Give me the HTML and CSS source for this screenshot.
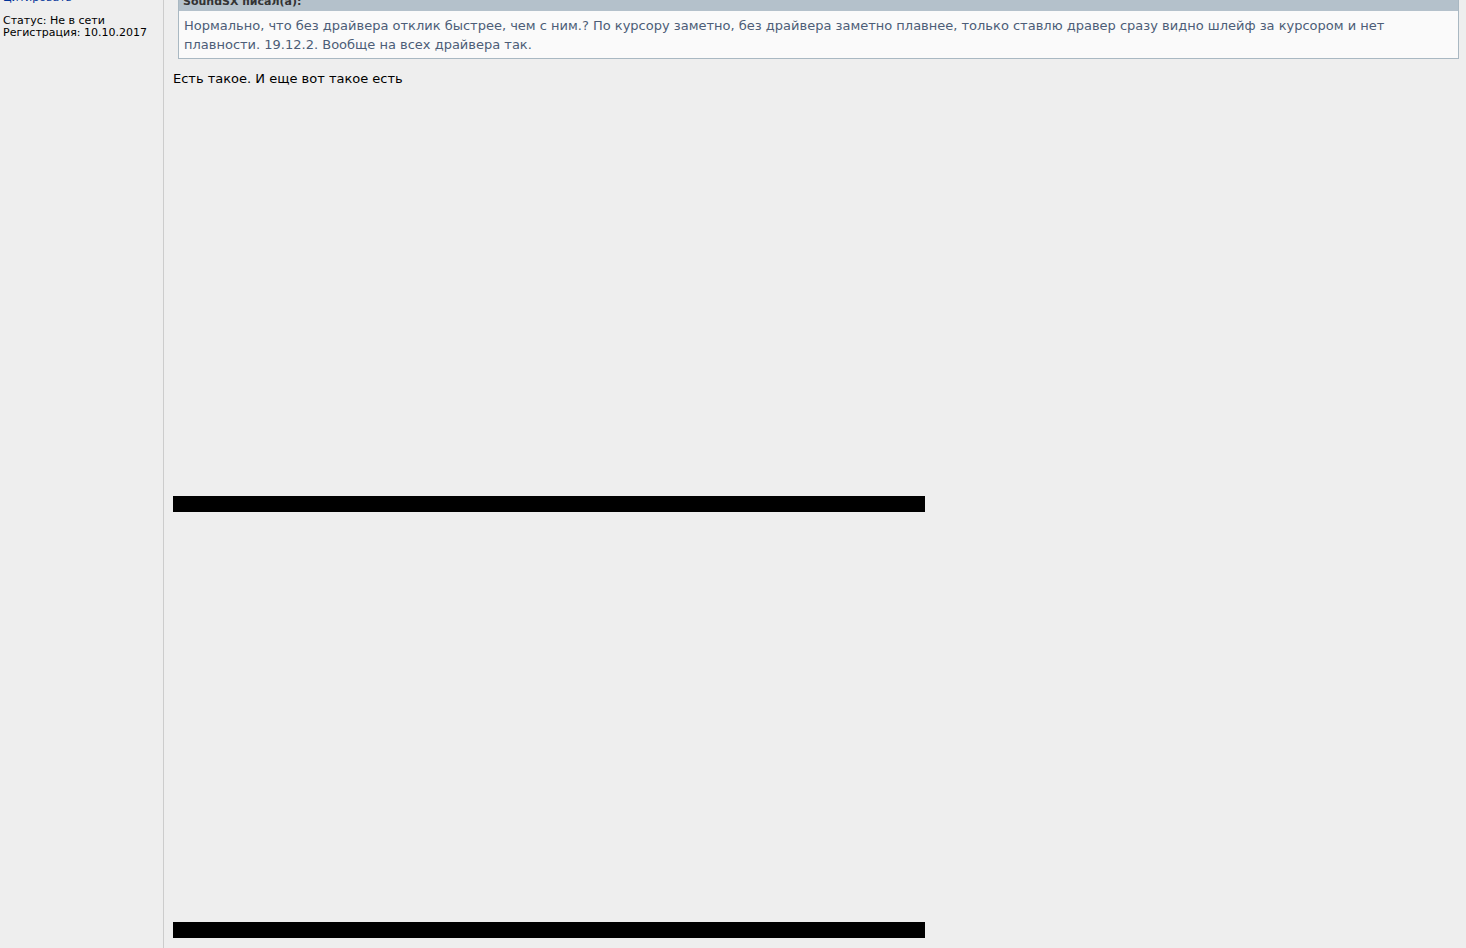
FILE: index.html
```html
<!DOCTYPE html>
<html lang="ru">
<head>
  <meta charset="UTF-8">
  <meta name="viewport" content="width=device-width, initial-scale=1.0">
  <title>Форум</title>
  <link rel="stylesheet" href="styles.css">
</head>
<body>
  <div class="post">
    <aside class="profile">
      <a href="#quote">Цитировать</a>
      <p class="details">
        Статус: Не в сети<br>
        Регистрация: 10.10.2017
      </p>
    </aside>

    <main class="content">
      <blockquote class="quote" id="quote">
        <div class="quote-title">SoundSX писал(а):</div>
        <div class="quote-text">Нормально, что без драйвера отклик быстрее, чем с ним.? По курсору заметно, без драйвера заметно плавнее, только ставлю дравер сразу видно шлейф за курсором и нет плавности. 19.12.2. Вообще на всех драйвера так.</div>
      </blockquote>
      <p class="message">Есть такое. И еще вот такое есть</p>
      <div class="video"><div class="video-bar"></div></div>
      <div class="video"><div class="video-bar"></div></div>
    </main>
  </div>
</body>
</html>
```
FILE: styles.css
```css
* {
  margin: 0;
  padding: 0;
  box-sizing: border-box;
}

body {
  font-family: Verdana, "DejaVu Sans", sans-serif;
  font-size: 13px;
  color: #000;
  background: #eee;
  overflow: hidden;
}

.post {
  display: flex;
  min-height: 100vh;
}

.profile {
  flex: 0 0 164px;
  padding-left: 3px;
  border-right: 1px solid #ccc;
  font-size: 11px;
  line-height: 12px;
}

/* the top of the post is scrolled out of view */
.profile a {
  display: block;
  margin-top: -8px;
  color: #039;
  text-decoration: none;
}

.details {
  margin-top: 11px;
}

.content {
  flex: 1;
  min-width: 0;
  padding: 0 7px 0 9px;
}

.quote {
  margin: -9px 0 12px 5px;
  border: 1px solid #a9b8c2;
  background: #fafafa;
}

.quote-title {
  padding: 2px 4px;
  background: #b4c1cb;
  color: #333;
  font-size: 11px;
  font-weight: bold;
  line-height: 15px;
}

.quote-text {
  padding: 5px 5px 4px;
  color: #4c5d77;
  line-height: 19px;
}

.message {
  line-height: 15px;
}

.video {
  display: flex;
  align-items: flex-end;
  max-width: 752px;
  height: 426px;
}

.video-bar {
  width: 100%;
  height: 16px;
  background: #000;
}
```
